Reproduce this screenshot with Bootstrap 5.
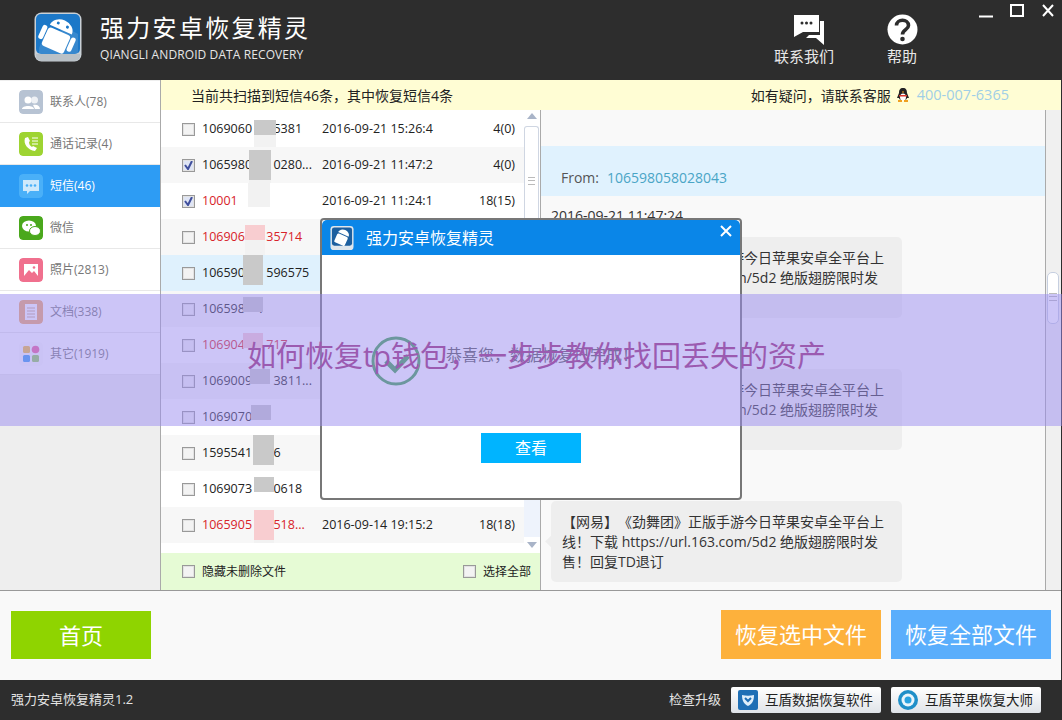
<!DOCTYPE html>
<html lang="zh-CN">
<head>
  <meta charset="UTF-8">
  <meta name="viewport" content="width=device-width, initial-scale=1.0">
  <title>强力安卓恢复精灵</title>
  <link href="https://cdn.jsdelivr.net/npm/bootstrap@5.3.1/dist/css/bootstrap.min.css" rel="stylesheet">
  <style>
    body {
      margin: 0;
      font-family: "Open Sans", "Noto Sans CJK SC", sans-serif;
      font-size: 12px;
      color: #222;
      text-spacing-trim: space-all;
    }
    .app-shell {
      position: relative;
      width: 1062px;
      height: 720px;
      overflow: hidden;
      background: #2d2d2d;
    }

    /* header */
    .top-bar { height: 80px; color: #fff; }
    .app-logo { margin: 12px 17px 0 33px; width: 50px; height: 50px; flex: none; }
    .app-title { font-size: 24px; letter-spacing: 2.3px; line-height: 32px; margin-top: 12px; }
    .app-sub { font-size: 12px; line-height: 16px; margin-top: 3px; color: #e6e6e6; letter-spacing: .1px; }
    .top-action { width: 60px; text-align: center; font-size: 15px; color: #e8e8e8; padding-top: 14px; line-height: 20px; }
    .top-action svg { display: block; margin: 0 auto 1px; }
    .top-action .contact-icon { margin-left: 19px; }
    .action-gap { margin-right: 38px; }
    .win-btns { padding: 4px 7px 0 0; margin-left: 47px; gap: 17px; }

    /* main */
    .main-area { height: 511px; background: #f9f9f9; width: 1061px; border-bottom: 1px solid #999; }
    .side-nav { width: 160px; background: #eee; border-right: 1px solid #aaa; box-sizing: content-box; padding-top: 1px; }
    .side-item { height: 42px; background: #fff; border-bottom: 1px solid #e8e8e8; padding-left: 19px; gap: 7px; color: #777; }
    .side-item.is-active { background: #2d9cf4; color: #fff; border-bottom-color: #2d9cf4; }
    .side-icon { width: 24px; height: 24px; border-radius: 4px; flex: none; }
    .content-col { min-width: 0; height: 510px; }
    .notice-bar { height: 30px; flex: none; background: #fffdd4; font-size: 14px; padding: 0 52px 0 30px; }
    .notice-tel { color: #9fcfe6; font-size: 14.500px; margin-left: 6px; }
    .work-row { height: 480px; flex: none; }
    .list-col { width: 379px; background: #fff; border-right: 1px solid #aaa; box-sizing: content-box; }
    .sms-scroll { height: 443px; flex: none; position: relative; padding-top: 1px; }
    .sms-row { position: relative; height: 36px; width: 363px; padding-left: 21px; font-size: 12.5px; }
    .sms-row:nth-child(even) { background: #f7f7f7; }
    .sms-row.is-hover { background: #dff1fd; }
    .sms-num { width: 120px; white-space: pre; }
    .sms-date { width: 125px; }
    .sms-count { width: 68px; text-align: right; }
    .is-red { color: #d8232a; }
    .blur-patch { position: absolute; background: #c9c9c9; }
    .blur-patch.is-pink { background: #f8cdd0; }
    .blur-patch.is-soft { background: #f2f2f2; }

    .box-check.form-check-input {
      width: 13px;
      height: 13px;
      margin: 0 7px 0 0;
      flex: none;
      border: 1px solid #999;
      border-radius: 0;
      background-color: #f3f3f3;
      box-shadow: inset 0 0 0 1px #e2e2e2;
    }
    .box-check.form-check-input:checked {
      background-color: #dfe5f5;
      background-image: url("data:image/svg+xml,%3csvg xmlns='http://www.w3.org/2000/svg' viewBox='0 0 13 13'%3e%3cpath fill='none' stroke='%23404f9c' stroke-width='2' d='M3 6l3 4 4-8'/%3e%3c/svg%3e");
      background-size: 13px 13px;
    }
    .list-scrollbar { position: absolute; right: 0; top: 0; bottom: 0; width: 16px; background: #fff; }
    .list-thumb { position: absolute; left: 0; right: 1px; top: 16px; height: 380px; background: #fff; border: 1px solid #cfd6e2; border-bottom: 0; border-radius: 3px 3px 0 0; }
    .thumb-lines { position: absolute; left: 3px; right: 3px; top: 50px; height: 8px; border-top: 1px solid #bbb; border-bottom: 1px solid #bbb; }
    .thumb-lines::after { content: ""; display: block; margin-top: 2px; border-top: 1px solid #bbb; }
    .list-track-end { position: absolute; left: 0; right: 0; bottom: 16px; height: 40px; background: #eef3fc; }
    .arrow-up, .arrow-down { position: absolute; left: 3px; width: 0; height: 0; border-left: 5px solid transparent; border-right: 5px solid transparent; }
    .arrow-up { top: 3px; border-bottom: 6px solid #a9b4c8; }
    .arrow-down { bottom: 5px; border-top: 6px solid #a9b4c8; }
    .list-foot { height: 37px; flex: none; background: #e6fbd5; padding: 0 9px 0 21px; }

    .pane-col { min-width: 0; overflow: hidden; }
    .msg-head { margin-top: 36px; height: 50px; background: #e0f2fe; padding: 12px 0 0 20px; font-size: 14px; color: #555; }
    .msg-head span { color: #4aa5c6; margin-left: 8px; }
    .msg-date { margin: 10px 0 0 10px; height: 31px; line-height: 20px; font-size: 14px; color: #333; }
    .msg-bubble { position: relative; width: 351px; height: 81px; margin: 0 0 20px 10px; padding: 11px 0 0 11px; background: #eee; border-radius: 5px; font-size: 14px; line-height: 20px; white-space: nowrap; color: #333; }
    .msg-bubble::before { content: ""; position: absolute; left: -4px; top: 36px; width: 9px; height: 9px; background: #eee; transform: rotate(45deg); }
    .pane-scrollbar { position: relative; width: 16px; flex: none; background: #f0f0f0; border-left: 1px solid #aaa; }
    .pane-thumb { position: absolute; left: 1px; top: 162px; width: 12px; height: 52px; background: #fff; border: 1px solid #c6cfe0; border-radius: 5px; }
    .pane-thumb .thumb-lines { left: 1px; right: 1px; top: 20px; }

    /* bottom */
    .action-bar { height: 89px; background: #f9f9f9; width: 1061px; padding: 19px 10px 0 11px; gap: 10px; }
    .big-btn { height: 49px; font-size: 22px; line-height: 49px; padding: 0; color: #fff; border: 0; border-radius: 0; }
    .big-btn:hover { color: #fff; }
    .btn-home { width: 140px; height: 48px; line-height: 48px; margin-top: 1px; background: #8fd400; }
    .btn-selected { width: 160px; background: #fdb13c; }
    .btn-all { width: 160px; background: #5aaefc; }
    .foot-bar { height: 40px; color: #e4e4e4; font-size: 13px; padding: 0 21px 0 11px; gap: 10px; }
    .foot-btn { width: 150px; height: 26px; padding: 0 0 0 7px; gap: 7px; font-size: 13.5px; line-height: 26px; color: #222; border: 0; border-radius: 2px; background: linear-gradient(#fff, #dfe3e8); white-space: nowrap; }

    /* dialog */
    .done-dialog { position: absolute; left: 320px; top: 218px; width: 422px; height: 282px; border: 2px solid #777; border-radius: 4px; background: #fff; overflow: hidden; }
    .done-head { height: 35px; background: #0a86e8; color: #fff; font-size: 16px; padding-left: 8px; gap: 12px; border: 0; border-radius: 0; }
    .done-close { position: absolute; right: 7px; top: 4px; }
    .done-body { padding: 0; }
    .done-msg { height: 178px; padding: 81px 0 0 49px; gap: 25px; font-size: 16px; color: #555; line-height: 24px; }
    .done-msg span { margin-top: 7px; }
    .done-btn { width: 100px; height: 30px; background: #00b4ff; color: #fff; font-size: 16px; line-height: 30px; padding: 0; border: 0; border-radius: 0; }
    .done-btn:hover { background: #00b4ff; color: #fff; }

    /* article banner laid over the whole window */
    .promo-band { position: absolute; left: 0; top: 294px; width: 1062px; height: 132px; background: rgba(153, 139, 239, .5); color: #9b5ab0; font-size: 29px; line-height: 124px; padding-left: 247px; white-space: nowrap; }
  </style>
</head>
<body>

<div class="app-shell">

  <div class="top-bar d-flex">
    <svg class="app-logo" viewBox="0 0 48 50">
      <rect x=".5" y=".5" width="47" height="49" rx="7" fill="#c9d0d6"/>
      <rect x="2" y="2" width="44" height="40" rx="5" fill="#1c78c8"/>
      <path d="M5 42L5 36 11 22 22 28 29 14 44 22V42Z" fill="#fff" opacity=".12"/>
      <g transform="rotate(24 24 24)" fill="#fff">
        <path d="M12 17a12 10 0 0 1 24 0z"/>
        <rect x="12" y="19" width="24" height="20" rx="3"/>
        <rect x="6" y="19" width="5" height="15" rx="2.5"/>
        <rect x="37" y="19" width="5" height="15" rx="2.5"/>
        <circle cx="19" cy="12" r="1.5" fill="#1c78c8"/>
        <circle cx="29" cy="12" r="1.5" fill="#1c78c8"/>
      </g>
      <path d="M2 42h44v2a5 5 0 0 1-5 5H7a5 5 0 0 1-5-5z" fill="#b9c1c7"/>
    </svg>
    <div class="flex-grow-1">
      <div class="app-title">强力安卓恢复精灵</div>
      <div class="app-sub">QIANGLI ANDROID DATA RECOVERY</div>
    </div>
    <div class="top-action action-gap">
      <svg class="contact-icon" width="32" height="31" viewBox="0 0 32 31">
        <path d="M1 1h25v17H10l-9 5z" fill="#fff"/>
        <circle cx="9" cy="9" r="1.500" fill="#2d2d2d"/><circle cx="13.500" cy="9" r="1.500" fill="#2d2d2d"/><circle cx="18" cy="9" r="1.500" fill="#2d2d2d"/>
        <path d="M27 7h4v24l-8-7H13l3-3h11z" fill="#fff"/>
      </svg>
      联系我们
    </div>
    <div class="top-action">
      <svg width="31" height="31" viewBox="0 0 31 31">
        <circle cx="15.500" cy="15.500" r="15" fill="#fff"/>
        <path d="M9.500 11.500c0-7 12-7 12 0 0 4-6 4.500-6 9" fill="none" stroke="#2d2d2d" stroke-width="3.600"/>
        <circle cx="15.500" cy="25" r="2.300" fill="#2d2d2d"/>
      </svg>
      帮助
    </div>
    <div class="win-btns d-flex align-items-start">
      <svg width="14" height="14" viewBox="0 0 14 14"><path d="M0 12.500h14" stroke="#fff" stroke-width="2"/></svg>
      <svg width="14" height="14" viewBox="0 0 14 14"><rect x="1" y="1" width="12" height="11" fill="none" stroke="#fff" stroke-width="2"/></svg>
      <svg width="14" height="14" viewBox="0 0 14 14"><path d="M2 1l10 11M12 1L2 12" stroke="#fff" stroke-width="2"/></svg>
    </div>
  </div>

  <div class="main-area d-flex">
    <div class="side-nav flex-none">
      <div class="side-item d-flex align-items-center">
        <svg class="side-icon" viewBox="0 0 24 24"><rect width="24" height="24" rx="4" fill="#b7c3d3"/><circle cx="9" cy="10" r="3.500" fill="#fff"/><circle cx="15.500" cy="10" r="3.500" fill="#eef1f5"/><path d="M3 19c0-4 12-4 12 0zM14 15c4-1 7 1 7 4h-5z" fill="#fff"/></svg>联系人(78)
      </div>
      <div class="side-item d-flex align-items-center">
        <svg class="side-icon" viewBox="0 0 24 24"><rect width="24" height="24" rx="4" fill="#9ed432"/><path d="M6 6c-2 6 3 12 10 13l2-3-4-2-1 1c-2-1-3-3-3-5l1-1-2-4z" fill="#fff"/><path d="M13 6h6M13 9h6M13 12h6" stroke="#fff"/></svg>通话记录(4)
      </div>
      <div class="side-item is-active d-flex align-items-center">
        <svg class="side-icon" viewBox="0 0 24 24"><rect width="24" height="24" rx="4" fill="#4ab0f8"/><path d="M4 6h16v11h-9l-3 3v-3H4z" fill="#cfe9fb"/><circle cx="8" cy="11.500" r="1.300" fill="#4ab0f8"/><circle cx="12" cy="11.500" r="1.300" fill="#4ab0f8"/><circle cx="16" cy="11.500" r="1.300" fill="#4ab0f8"/></svg>短信(46)
      </div>
      <div class="side-item d-flex align-items-center">
        <svg class="side-icon" viewBox="0 0 24 24"><rect width="24" height="24" rx="4" fill="#4aa81c"/><ellipse cx="10" cy="10" rx="7" ry="5.500" fill="#fff"/><ellipse cx="16" cy="15" rx="5.500" ry="4.500" fill="#fff" stroke="#4aa81c"/><circle cx="8" cy="9" r="1" fill="#4aa81c"/><circle cx="12" cy="9" r="1" fill="#4aa81c"/></svg>微信
      </div>
      <div class="side-item d-flex align-items-center">
        <svg class="side-icon" viewBox="0 0 24 24"><rect width="24" height="24" rx="4" fill="#f0708e"/><rect x="5" y="6" width="14" height="12" fill="#fff"/><path d="M5 18l5-6 3 3 2-2 4 5z" fill="#f0708e"/><circle cx="15" cy="9.500" r="1.300" fill="#f0708e"/></svg>照片(2813)
      </div>
      <div class="side-item d-flex align-items-center">
        <svg class="side-icon" viewBox="0 0 24 24"><rect width="24" height="24" rx="4" fill="#f0a868"/><rect x="6" y="4" width="12" height="16" fill="#fff"/><path d="M8 8h8M8 11h8M8 14h8M8 17h8" stroke="#c9a98e"/></svg>文档(338)
      </div>
      <div class="side-item d-flex align-items-center">
        <svg class="side-icon" viewBox="0 0 24 24"><rect width="24" height="24" rx="4" fill="#fafafa"/><rect x="4" y="4" width="7" height="7" rx="1.500" fill="#f5bf3a"/><circle cx="16.500" cy="7.500" r="3.800" fill="#ef5f9d"/><rect x="4" y="13" width="7" height="7" rx="1.500" fill="#3a9cf0"/><rect x="13" y="13" width="7" height="7" rx="1.500" fill="#94cf5c"/></svg>其它(1919)
      </div>
    </div>

    <div class="content-col flex-grow-1 d-flex flex-column">
      <div class="notice-bar d-flex align-items-center justify-content-between">
        <span>当前共扫描到短信46条，其中恢复短信4条</span>
        <span class="d-flex align-items-center">如有疑问，请联系客服
          <svg class="ms-1" width="16" height="16" viewBox="0 0 16 16"><path d="M8 1c3 0 4 2 4 5l2 5-2 0c0 1-1 2-4 2s-4-1-4-2H2l2-5c0-3 1-5 4-5z" fill="#222"/><ellipse cx="8" cy="10" rx="3" ry="3.500" fill="#fff"/><path d="M4 8h8v1.500H4z" fill="#d9362b"/><path d="M3 13h4v2H3zM9 13h4v2H9zM7 5l1-1 1 1-1 1z" fill="#f0a020"/></svg>
          <span class="notice-tel">400-007-6365</span>
        </span>
      </div>
      <div class="work-row d-flex">
        <div class="list-col d-flex flex-column flex-none">
          <div class="sms-scroll">
            <div id="sms-list"></div>
            <div class="list-scrollbar">
              <div class="list-thumb"><div class="thumb-lines"></div></div>
              <div class="list-track-end"></div>
              <div class="arrow-up"></div>
              <div class="arrow-down"></div>
            </div>
          </div>
          <div class="list-foot d-flex align-items-center justify-content-between">
            <label class="d-flex align-items-center"><input class="form-check-input box-check" type="checkbox">隐藏未删除文件</label>
            <label class="d-flex align-items-center"><input class="form-check-input box-check" type="checkbox">选择全部</label>
          </div>
        </div>
        <div class="pane-col flex-grow-1">
          <div class="msg-head d-flex align-items-center">From: <span>106598058028043</span></div>
          <div class="msg-date">2016-09-21 11:47:24</div>
          <div class="msg-bubble">【网易】《劲舞团》正版手游今日苹果安卓全平台上<br>线！下载 https://url.163.com/5d2 绝版翅膀限时发<br>售！回复TD退订</div>
          <div class="msg-date">2016-09-21 11:47:24</div>
          <div class="msg-bubble">【网易】《劲舞团》正版手游今日苹果安卓全平台上<br>线！下载 https://url.163.com/5d2 绝版翅膀限时发<br>售！回复TD退订</div>
          <div class="msg-date">2016-09-21 11:47:24</div>
          <div class="msg-bubble">【网易】《劲舞团》正版手游今日苹果安卓全平台上<br>线！下载 https://url.163.com/5d2 绝版翅膀限时发<br>售！回复TD退订</div>
        </div>
        <div class="pane-scrollbar">
          <div class="pane-thumb"><div class="thumb-lines"></div></div>
        </div>
      </div>
    </div>
  </div>

  <div class="action-bar d-flex">
    <button class="btn big-btn btn-home me-auto">首页</button>
    <button class="btn big-btn btn-selected">恢复选中文件</button>
    <button class="btn big-btn btn-all">恢复全部文件</button>
  </div>

  <div class="foot-bar d-flex align-items-center">
    <span class="me-auto">强力安卓恢复精灵1.2</span>
    <span>检查升级</span>
    <button class="btn foot-btn d-flex align-items-center">
      <svg width="20" height="20" viewBox="0 0 20 20"><rect width="20" height="20" rx="2" fill="#1f6fb5"/><path d="M4 5c4 1 8 1 12 0 0 6-2 9-6 11-4-2-6-5-6-11z" fill="#dfeefa"/><path d="M7 8l3 3 3-3" fill="none" stroke="#1f6fb5" stroke-width="2"/></svg>互盾数据恢复软件
    </button>
    <button class="btn foot-btn d-flex align-items-center">
      <svg width="20" height="20" viewBox="0 0 20 20"><circle cx="10" cy="10" r="10" fill="#1f8fc8"/><circle cx="10" cy="10" r="6.500" fill="#e9f5fb"/><circle cx="10" cy="10" r="3.500" fill="#2aa3e0"/></svg>互盾苹果恢复大师
    </button>
  </div>

  <div class="done-dialog card">
    <div class="done-head card-header d-flex align-items-center">
      <svg width="24" height="24" viewBox="0 0 48 50">
        <rect width="48" height="50" rx="7" fill="#dfe6ec"/>
        <rect x="3" y="3" width="42" height="38" rx="5" fill="#1c5f9f"/>
        <g transform="rotate(24 24 24)" fill="#fff"><path d="M12 17a12 10 0 0 1 24 0z"/><rect x="12" y="19" width="24" height="20" rx="3"/></g>
      </svg>
      强力安卓恢复精灵
      <svg class="done-close" width="14" height="14" viewBox="0 0 14 14"><path d="M2 2l10 10M12 2L2 12" stroke="#fff" stroke-width="2"/></svg>
    </div>
    <div class="done-body card-body">
      <div class="done-msg d-flex align-items-start">
        <svg width="50" height="50" viewBox="0 0 50 50"><circle cx="25" cy="25" r="23" fill="none" stroke="#3fa34d" stroke-width="3"/><path d="M15 25l9 9 13-14" fill="none" stroke="#3fa34d" stroke-width="5"/></svg>
        <span>恭喜您，数据恢复已完成！</span>
      </div>
      <div class="text-center"><button class="btn done-btn">查看</button></div>
    </div>
  </div>

  <div class="promo-band">如何恢复tp钱包，一步步教你找回丢失的资产</div>
</div>

<script src="https://cdn.jsdelivr.net/npm/bootstrap@5.3.1/dist/js/bootstrap.bundle.min.js"></script>
<script>
  // Rows of the list; rows under the dialog have no visible date or count.
  // "_" stands for a digit hidden by the grey block, patch = [left, top, width, height]
  const smsRows = [
    { num: "1069060___5381", date: "2016-09-21 15:26:4", count: "4(0)", patch: [93, 9, 22, 15], pale: [93, 24, 22, 12] },
    { num: "1065980___0280...", date: "2016-09-21 11:47:2", count: "4(0)", checked: true, patch: [88, 3, 22, 30], pale: [88, 33, 22, 3] },
    { num: "10001", date: "2016-09-21 11:24:1", count: "18(15)", checked: true, red: true, pale: [87, 0, 22, 24] },
    { num: "106906___35714", red: true, patch: [84, 6, 20, 15], pale: [84, 21, 20, 15] },
    { num: "106590___596575", hover: true, patch: [82, 0, 20, 30] },
    { num: "106598__.", patch: [82, 6, 20, 15] },
    { num: "106904___717", red: true, patch: [82, 6, 20, 15] },
    { num: "1069009___3811...", patch: [89, 6, 20, 15] },
    { num: "1069070", patch: [90, 6, 20, 15] },
    { num: "1595541___6", patch: [92, 0, 21, 30] },
    { num: "1069073___0618", patch: [93, 6, 20, 15] },
    { num: "1065905___518...", date: "2016-09-14 19:15:2", count: "18(18)", red: true, patch: [93, 3, 20, 30], pale: [93, 33, 20, 3] }
  ];

  function patchHtml(box, cls) {
    if (!box) return "";
    const [left, top, w, h] = box;
    return `<span class="blur-patch ${cls}" style="left:${left}px;top:${top}px;width:${w}px;height:${h}px"></span>`;
  }

  const listEl = document.getElementById("sms-list");
  smsRows.forEach(row => {
    const div = document.createElement("div");
    div.className = "sms-row d-flex align-items-center" + (row.hover ? " is-hover" : "");
    div.innerHTML = `
      <input class="form-check-input box-check" type="checkbox" ${row.checked ? "checked" : ""}>
      <span class="sms-num ${row.red ? "is-red" : ""}">${row.num.replace(/_/g, "\u2007")}</span>
      <span class="sms-date">${row.date || ""}</span>
      <span class="sms-count">${row.count || ""}</span>
      ${patchHtml(row.pale, "is-soft")}
      ${patchHtml(row.patch, row.red ? "is-pink" : "")}`;
    listEl.appendChild(div);
  });
</script>

</body>
</html>
